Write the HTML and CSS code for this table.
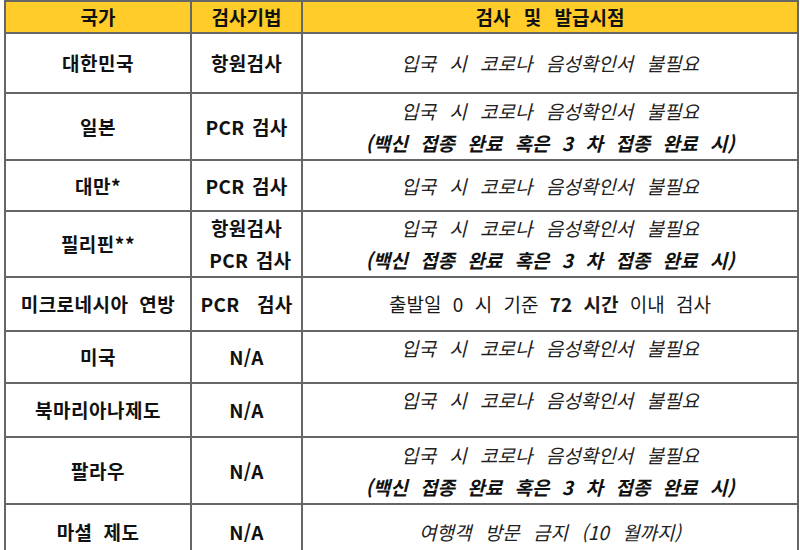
FILE: index.html
```html
<!DOCTYPE html>
<html lang="ko">
<head>
<meta charset="utf-8">
<link rel="stylesheet" href="styles.css">
</head>
<body>
<table class="grid">
  <colgroup>
    <col class="c-country">
    <col class="c-method">
    <col class="c-time">
  </colgroup>
  <thead>
    <tr class="head">
      <th>국가</th>
      <th>검사기법</th>
      <th>검사 및 발급시점</th>
    </tr>
  </thead>
  <tbody>
    <tr class="r1">
      <td class="name">대한민국</td>
      <td class="method">항원검사</td>
      <td class="note">입국 시 코로나 음성확인서 불필요</td>
    </tr>
    <tr class="r2">
      <td class="name">일본</td>
      <td class="method">PCR 검사</td>
      <td class="note">입국 시 코로나 음성확인서 불필요<br><b>(백신 접종 완료 혹은 3 차 접종 완료 시)</b></td>
    </tr>
    <tr class="r3">
      <td class="name">대만*</td>
      <td class="method">PCR 검사</td>
      <td class="note">입국 시 코로나 음성확인서 불필요</td>
    </tr>
    <tr class="r4">
      <td class="name">필리핀**</td>
      <td class="method">항원검사<br>&nbsp;PCR 검사</td>
      <td class="note">입국 시 코로나 음성확인서 불필요<br><b>(백신 접종 완료 혹은 3 차 접종 완료 시)</b></td>
    </tr>
    <tr class="r5">
      <td class="name">미크로네시아 연방</td>
      <td class="method wide">PCR 검사</td>
      <td class="plain">출발일 0 시 기준 <b>72 시간</b> 이내 검사</td>
    </tr>
    <tr class="r6">
      <td class="name">미국</td>
      <td class="method">N/A</td>
      <td class="note top">입국 시 코로나 음성확인서 불필요</td>
    </tr>
    <tr class="r7">
      <td class="name">북마리아나제도</td>
      <td class="method">N/A</td>
      <td class="note top">입국 시 코로나 음성확인서 불필요</td>
    </tr>
    <tr class="r8">
      <td class="name">팔라우</td>
      <td class="method">N/A</td>
      <td class="note">입국 시 코로나 음성확인서 불필요<br><b>(백신 접종 완료 혹은 3 차 접종 완료 시)</b></td>
    </tr>
    <tr class="r9">
      <td class="name">마셜 제도</td>
      <td class="method">N/A</td>
      <td class="note">여행객 방문 금지 (10 월까지)</td>
    </tr>
  </tbody>
</table>
</body>
</html>
```

FILE: styles.css
```css
html, body {
  margin: 0;
  padding: 0;
  background: #ffffff;
}
body {
  padding: 0 0 0 4px;
  font-family: "Noto Sans CJK KR", "Noto Sans", sans-serif;
  font-size: 19px;
  color: #111;
}
.grid {
  border-collapse: collapse;
  table-layout: fixed;
  width: 793px;
}
.c-country { width: 186px; }
.c-method { width: 111px; }
.c-time { width: 496px; }
.grid th, .grid td {
  border: 2px solid #666;
  padding: 0;
  text-align: center;
  vertical-align: middle;
  line-height: 32px;
}
.grid .head th {
  background: #ffcc29;
  font-weight: 700;
  height: 30px;
  line-height: 30px;
  word-spacing: 8px;
}
.grid .name {
  font-weight: 700;
  letter-spacing: 0.5px;
  word-spacing: 5px;
}
.grid .method {
  font-weight: 700;
  letter-spacing: 0.3px;
  word-spacing: 2px;
}
.grid .method.wide { word-spacing: 12px; }
.grid .note {
  font-style: italic;
  color: #222;
  word-spacing: 8px;
}
.grid .note b {
  color: #111;
  word-spacing: 7px;
}
.grid .plain {
  color: #1a1a1a;
  word-spacing: 6px;
}
.grid .top {
  vertical-align: top;
  line-height: 28px;
  padding-top: 2px;
}
.r1 td { height: 58px; }
.r2 td { height: 65px; }
.r3 td { height: 49px; }
.r4 td { height: 64px; }
.r5 td { height: 52px; }
.r6 td { height: 48px; }
.r7 td { height: 50px; }
.r8 td { height: 65px; }
.r9 td { height: 54px; }
```
